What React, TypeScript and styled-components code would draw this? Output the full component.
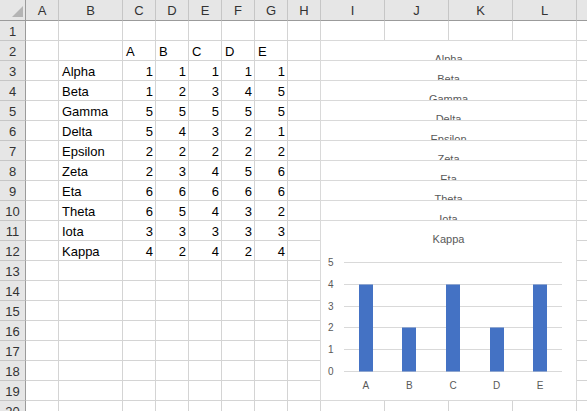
import React from "react";
import styled, { createGlobalStyle } from "styled-components";

const Global = createGlobalStyle`
  html, body { margin: 0; padding: 0; background: #fff; overflow: hidden; }
  body { font-family: "Liberation Sans", Arial, sans-serif; }
  * { box-sizing: border-box; }
`;

const COLS = ["A", "B", "C", "D", "E", "F", "G", "H", "I", "J", "K", "L", "M"];
const WIDTHS = [33, 64, 33, 33, 33, 33, 33, 33, 64, 64, 64, 64, 64];

const DATA: [string, number[]][] = [
  ["Alpha", [1, 1, 1, 1, 1]],
  ["Beta", [1, 2, 3, 4, 5]],
  ["Gamma", [5, 5, 5, 5, 5]],
  ["Delta", [5, 4, 3, 2, 1]],
  ["Epsilon", [2, 2, 2, 2, 2]],
  ["Zeta", [2, 3, 4, 5, 6]],
  ["Eta", [6, 6, 6, 6, 6]],
  ["Theta", [6, 5, 4, 3, 2]],
  ["Iota", [3, 3, 3, 3, 3]],
  ["Kappa", [4, 2, 4, 2, 4]],
];
const SERIES = ["A", "B", "C", "D", "E"];

const Wrap = styled.div`
  position: relative;
  width: 587px;
  height: 411px;
  overflow: hidden;
`;

const Sheet = styled.div`
  display: grid;
  grid-template-columns: 26px ${WIDTHS.map((w) => `${w}px`).join(" ")};
  grid-template-rows: 21px repeat(20, 20px);
  font-size: 13px;
  color: #000;
`;

const Corner = styled.div`
  position: relative;
  background: #e6e6e6;
  border-right: 1px solid #9b9b9b;
  border-bottom: 1px solid #9b9b9b;
`;

const CornerTriangle = styled.div`
  position: absolute;
  right: 2px;
  bottom: 3px;
  width: 11px;
  height: 11px;
  background: #b4b4b4;
  clip-path: polygon(100% 0, 100% 100%, 0 100%);
`;

const ColHead = styled.div`
  display: flex;
  align-items: center;
  justify-content: center;
  background: #e6e6e6;
  border-right: 1px solid #c6c6c6;
  border-bottom: 1px solid #9b9b9b;
  color: #333;
  line-height: 15px;
`;

const RowHead = styled.div`
  display: flex;
  align-items: flex-end;
  justify-content: center;
  padding-bottom: 1px;
  background: #e6e6e6;
  border-right: 1px solid #9b9b9b;
  border-bottom: 1px solid #c6c6c6;
  color: #333;
  line-height: 15px;
`;

const Cell = styled.div<{ $align?: "left" | "right" }>`
  display: flex;
  align-items: flex-end;
  justify-content: ${(p) => (p.$align === "right" ? "flex-end" : "flex-start")};
  padding: 0 2px 1px 3px;
  border-right: 1px solid #d4d4d4;
  border-bottom: 1px solid #d4d4d4;
  line-height: 15px;
  white-space: nowrap;
  overflow: hidden;
`;

const ChartStack = styled.div`
  position: absolute;
  left: 320px;
  top: 40px;
  width: 257px;
  display: flex;
  flex-direction: column;
`;

const ChartStrip = styled.div`
  height: 20px;
  border: 1px solid #d9d9d9;
  border-bottom: none;
  background: #fff;
  overflow: hidden;
`;

const ChartCard = styled.div`
  height: 181px;
  border: 1px solid #d9d9d9;
  background: #fff;
  overflow: hidden;
`;

const ChartTitle = styled.div`
  padding-top: 12px;
  text-align: center;
  font-size: 11px;
  line-height: 13px;
  color: #595959;
  white-space: nowrap;
`;

const Plot = styled.svg`
  display: block;
  font-family: "Liberation Sans", Arial, sans-serif;
`;

const yOf = (v: number) => Math.round(125.5 - v * 21.8 - 0.5) + 0.5;
const X0 = 23;
const X1 = 241;

function BarChart({ values }: { values: number[] }) {
  const cw = (X1 - X0) / values.length;
  return (
    <Plot width={255} height={153} viewBox="0 0 255 153">
      {[0, 1, 2, 3, 4, 5].map((t) => (
        <g key={t}>
          <line x1={X0} x2={X1} y1={yOf(t)} y2={yOf(t)} stroke="#d9d9d9" strokeWidth={1} />
          <text x={12.5} y={yOf(t)} dy="0.35em" textAnchor="end" fontSize={10} fill="#595959">
            {t}
          </text>
        </g>
      ))}
      {values.map((v, i) => {
        const cx = X0 + cw * (i + 0.5);
        return (
          <g key={i}>
            <rect x={Math.round(cx - 7)} y={yOf(v)} width={14} height={yOf(0) - yOf(v)} fill="#4472c4" />
            <text x={cx} y={139} dy="0.35em" textAnchor="middle" fontSize={10} fill="#595959">
              {SERIES[i]}
            </text>
          </g>
        );
      })}
    </Plot>
  );
}

function cellContent(row: number, col: number): { text: string; align: "left" | "right" } | null {
  if (row === 2 && col >= 2 && col <= 6) return { text: SERIES[col - 2], align: "left" };
  if (row >= 3 && row <= 12) {
    const [name, vals] = DATA[row - 3];
    if (col === 1) return { text: name, align: "left" };
    if (col >= 2 && col <= 6) return { text: String(vals[col - 2]), align: "right" };
  }
  return null;
}

export default function App() {
  const rows = Array.from({ length: 20 }, (_, i) => i + 1);
  const last = DATA[DATA.length - 1];
  return (
    <Wrap>
      <Global />
      <Sheet>
        <Corner>
          <CornerTriangle />
        </Corner>
        {COLS.map((c) => (
          <ColHead key={c}>{c}</ColHead>
        ))}
        {rows.map((r) => (
          <React.Fragment key={r}>
            <RowHead>{r}</RowHead>
            {COLS.map((c, ci) => {
              const content = cellContent(r, ci);
              return (
                <Cell key={c} $align={content?.align}>
                  {content?.text}
                </Cell>
              );
            })}
          </React.Fragment>
        ))}
      </Sheet>
      <ChartStack>
        {DATA.slice(0, -1).map(([name]) => (
          <ChartStrip key={name}>
            <ChartTitle>{name}</ChartTitle>
          </ChartStrip>
        ))}
        <ChartCard>
          <ChartTitle>{last[0]}</ChartTitle>
          <BarChart values={last[1]} />
        </ChartCard>
      </ChartStack>
    </Wrap>
  );
}
